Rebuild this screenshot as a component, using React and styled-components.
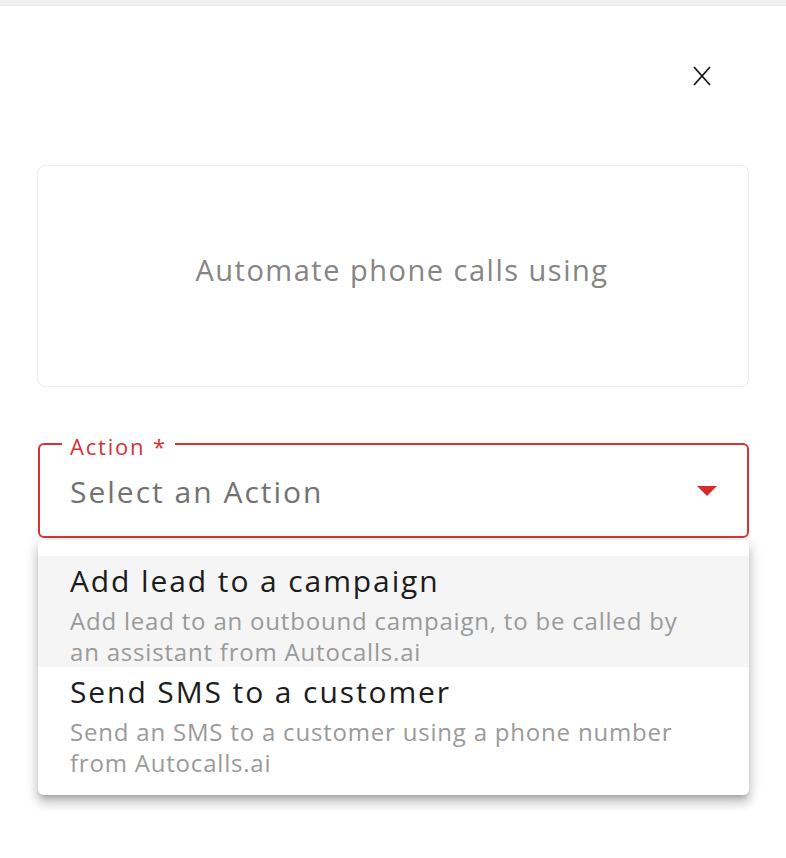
import React from "react";
import styled, { createGlobalStyle } from "styled-components";

const GlobalStyle = createGlobalStyle`
  html, body {
    margin: 0;
    padding: 0;
    background: #fff;
    font-family: "Open Sans", "Noto Sans", sans-serif;
  }
`;

const options = [
  {
    title: "Add lead to a campaign",
    desc: "Add lead to an outbound campaign, to be called by an assistant from Autocalls.ai",
    hover: true,
  },
  {
    title: "Send SMS to a customer",
    desc: "Send an SMS to a customer using a phone number from Autocalls.ai",
  },
];

export default function App() {
  return (
    <>
      <GlobalStyle />
      <Page>
        <TopStrip />
        <Header>
          <CloseButton aria-label="close">
            <svg width="20" height="20" viewBox="0 0 20 20">
              <path d="M2 1 L18 19 M18 1 L2 19" stroke="#1a1a1a" strokeWidth="1.8" fill="none" />
            </svg>
          </CloseButton>
        </Header>
        <Body>
          <IntroCard>
            <IntroText>Automate phone calls using</IntroText>
          </IntroCard>
          <Field>
            <Outline>
              <Legend>Action *</Legend>
            </Outline>
            <SelectValue>Select an Action</SelectValue>
            <Arrow viewBox="0 0 20 10" width="20" height="10">
              <path d="M0 0 L20 0 L10 10 Z" fill="#d92b2b" />
            </Arrow>
          </Field>
          <Menu>
            {options.map((o) => (
              <MenuItem key={o.title} $active={o.hover}>
                <ItemTitle>{o.title}</ItemTitle>
                <ItemDesc>{o.desc}</ItemDesc>
              </MenuItem>
            ))}
          </Menu>
        </Body>
      </Page>
    </>
  );
}

const Page = styled.div`
  width: 786px;
  min-height: 858px;
  display: flex;
  flex-direction: column;
`;

const TopStrip = styled.div`
  height: 5px;
  background: #f1f1f1;
  border-bottom: 1px solid #ebebeb;
`;

const Header = styled.div`
  display: flex;
  justify-content: flex-end;
  padding: 60px 74px 0 0;
  height: 32px;
`;

const CloseButton = styled.button`
  border: none;
  background: none;
  padding: 0;
  width: 20px;
  height: 20px;
  display: flex;
  cursor: pointer;
`;

const Body = styled.div`
  padding: 67px 37px 0 37px;
  display: flex;
  flex-direction: column;
`;

const IntroCard = styled.div`
  height: 222px;
  border: 1px solid #ececec;
  border-radius: 8px;
  display: flex;
  align-items: center;
  justify-content: center;
  box-sizing: border-box;
  padding-bottom: 14px;
`;

const IntroText = styled.div`
  font-size: 29px;
  color: #858585;
  letter-spacing: 1.5px;
  margin-left: 18px;
`;

const Field = styled.div`
  position: relative;
  margin-top: 57px;
  height: 94px;
  display: flex;
  align-items: center;
  padding: 0 32px 0 33px;
  box-sizing: border-box;
`;

const Outline = styled.fieldset`
  position: absolute;
  inset: -12px 0 0 1px;
  margin: 0;
  padding: 0 22px;
  border: 2.5px solid #d63232;
  border-radius: 6px;
  pointer-events: none;
  box-sizing: border-box;
`;

const Legend = styled.legend`
  padding: 0 8px;
  font-size: 22px;
  letter-spacing: 1.8px;
  color: #d63232;
  line-height: 24px;
  transform: translateY(2px);
`;

const SelectValue = styled.div`
  flex: 1;
  font-size: 30px;
  letter-spacing: 2px;
  color: #727272;
`;

const Arrow = styled.svg`
  display: block;
`;

const Menu = styled.div`
  margin: 2px 0 0 1px;
  padding: 16px 0 17px;
  background: #fff;
  border-radius: 6px;
  box-shadow: 0px 5px 5px -3px rgba(0, 0, 0, 0.2), 0px 8px 10px 1px rgba(0, 0, 0, 0.14),
    0px 3px 14px 2px rgba(0, 0, 0, 0.12);
`;

const MenuItem = styled.div`
  padding: 7px 44px 0 32px;
  height: 111px;
  box-sizing: border-box;
  background: ${(p) => (p.$active ? "#f5f5f5" : "transparent")};
`;

const ItemTitle = styled.div`
  font-size: 30px;
  line-height: 36px;
  letter-spacing: 1.9px;
  color: #1c1c1c;
`;

const ItemDesc = styled.div`
  font-size: 24px;
  line-height: 31px;
  letter-spacing: 0.8px;
  color: #9a9a9a;
  margin-top: 6px;
`;
